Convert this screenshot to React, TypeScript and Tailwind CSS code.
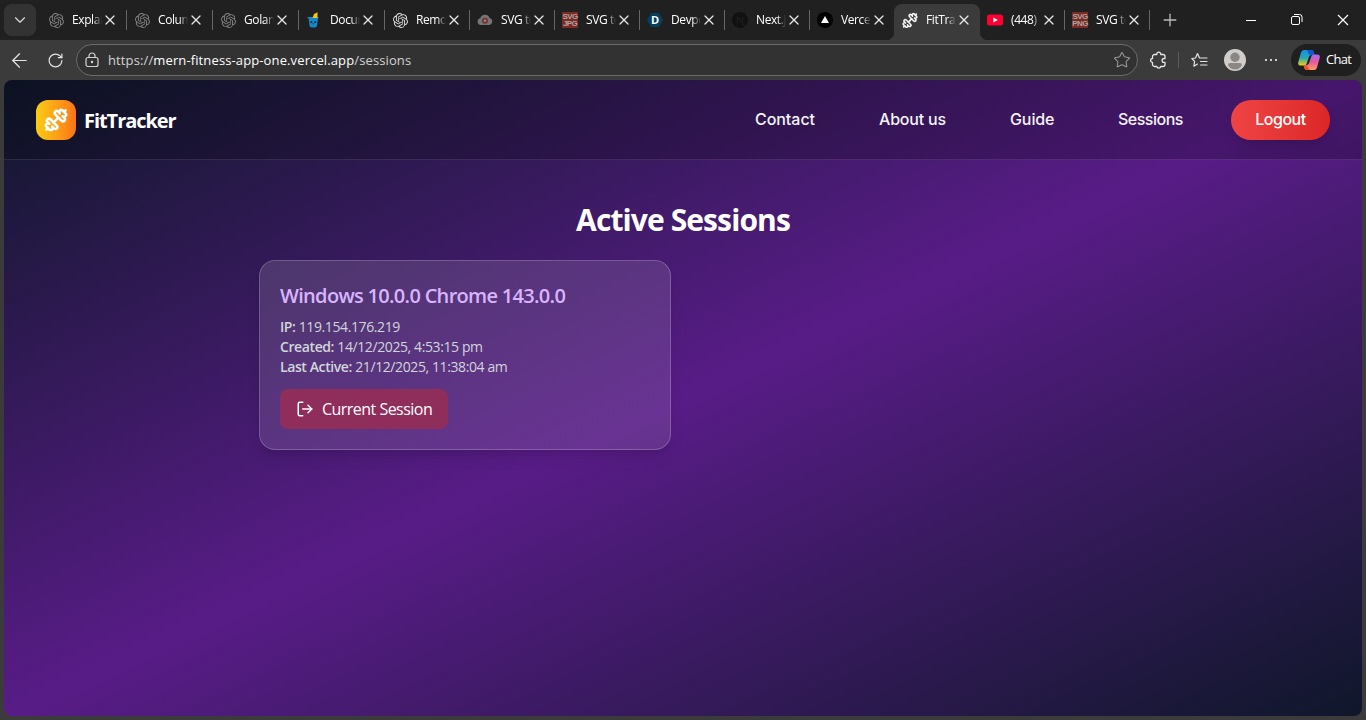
import type { ReactNode } from 'react';
import {
  ArrowLeft,
  ChevronDown,
  Dumbbell,
  LogOut,
  Plus,
  RotateCw,
  Star,
  X,
} from 'lucide-react';
import { SiNextdotjs, SiOpenai } from 'react-icons/si';

type Tab = {
  title: string;
  icon: ReactNode;
  active?: boolean;
  className: string;
  hideDivider?: boolean;
};

type Session = {
  device: string;
  ip: string;
  created: string;
  lastActive: string;
};

const SvgBadge = ({ label }: { label: string }) => (
  <div className="flex h-4 w-4 flex-col items-center justify-center bg-[#7d2a22] font-['Liberation_Sans'] text-[8px] leading-[7.5px] font-bold tracking-[-0.6px] text-[#aaa5a3]">
    <span>SVG</span>
    <span>{label}</span>
  </div>
);

const CupIcon = () => (
  <svg width="16" height="16" viewBox="0 0 16 16">
    <path d="M2.5 5h9.6l-1 8.600q-.2 2-3.800 2t-3.800-2z" fill="#1488c9" />
    <path d="M1.5 5h11v1.500h-11z" fill="#0f86c9" />
    <path d="M6.500 6 8 2 11.500.3v5.700z" fill="#f2c511" />
    <circle cx="5.400" cy="10" r="1" fill="#06263a" />
    <circle cx="9.200" cy="10" r="1" fill="#06263a" />
    <path d="M6.200 11.600h2.200q-1 1.400-2.200 0z" fill="#06263a" />
  </svg>
);

const CloudIcon = () => (
  <svg width="16" height="16" viewBox="0 0 16 16">
    <path
      d="M4 13a3.4 3.4 0 0 1-.8-6.7A5 5 0 0 1 12.6 6 3.6 3.6 0 0 1 12.3 13z"
      fill="#757575"
    />
    <circle cx="8" cy="8.7" r="2.2" fill="none" stroke="#7d2a2f" strokeWidth="1.5" />
    <circle cx="8" cy="8.7" r=".8" fill="#999" />
  </svg>
);

const HexIcon = () => (
  <div className="relative h-4 w-4">
    <svg width="16" height="16" viewBox="0 0 16 16">
      <path d="M4 1h8l4 7-4 7H4L0 8z" fill="#06405b" />
    </svg>
    <span className="absolute inset-0 text-center font-['Open_Sans'] text-[11px] leading-4 font-bold text-white">
      D
    </span>
  </div>
);

const VercelIcon = () => (
  <svg width="16" height="16" viewBox="0 0 16 16">
    <circle cx="8" cy="8" r="8" fill="#000" />
    <path d="m8 4 4 7H4z" fill="#fff" />
  </svg>
);

const YoutubeIcon = () => (
  <svg width="16" height="16" viewBox="0 0 16 16">
    <rect y="2.5" width="16" height="11" rx="2.5" fill="#ff0033" />
    <path d="m6.3 5.6 4.5 2.4-4.5 2.4z" fill="#fff" />
  </svg>
);

const tabs: Tab[] = [
  { title: 'Explain', icon: <SiOpenai size={15} color="#808080" />, className: 'w-[86px]' },
  { title: 'Column', icon: <SiOpenai size={15} color="#808080" />, className: 'w-[86px]' },
  { title: 'Golang', icon: <SiOpenai size={15} color="#808080" />, className: 'w-[86px]' },
  { title: 'Docum', icon: <CupIcon />, className: 'w-[86px]' },
  { title: 'Remov', icon: <SiOpenai size={15} color="#dedede" />, className: 'w-[85px]' },
  { title: 'SVG to', icon: <CloudIcon />, className: 'w-[85px]' },
  { title: 'SVG to', icon: <SvgBadge label="JPG" />, className: 'w-[85px]' },
  { title: 'Devpo', icon: <HexIcon />, className: 'w-[85px]' },
  { title: 'Next.js', icon: <SiNextdotjs size={16} color="#111" />, className: 'w-[85px]' },
  { title: 'Vercel', icon: <VercelIcon />, className: 'w-[85px]', hideDivider: true },
  {
    title: 'FitTrac',
    icon: <Dumbbell size={17} strokeWidth={2.4} color="#f4f4f4" />,
    active: true,
    className: 'w-[85px]',
    hideDivider: true,
  },
  { title: '(448)', icon: <YoutubeIcon />, className: 'w-[85px]' },
  { title: 'SVG to', icon: <SvgBadge label="PNG" />, className: 'w-[85px]' },
];

const sessions: Session[] = [
  {
    device: 'Windows 10.0.0 Chrome 143.0.0',
    ip: '119.154.176.219',
    created: '14/12/2025, 4:53:15 pm',
    lastActive: '21/12/2025, 11:38:04 am',
  },
];

const links = [
  { label: 'Contact', className: 'w-[60px] tracking-[-0.05px]' },
  { label: 'About us', className: 'w-[67px] tracking-[-0.2px]' },
  { label: 'Guide', className: 'w-[44px] tracking-[-0.1px]' },
  { label: 'Sessions', className: 'w-[65px] tracking-[-0.5px]' },
];

function BrowserTab({ tab }: { tab: Tab }) {
  return (
    <div className={`relative flex h-9 shrink-0 items-center pb-1 pl-[7px] ${tab.className}`}>
      {tab.active && (
        <>
          <div className="absolute inset-y-0 -left-px w-[86px] rounded-t-lg bg-[#3b3b3b]" />
          <div className="absolute bottom-0 -left-[9px] h-2 w-2 bg-[radial-gradient(circle_at_0_0,transparent_8px,#3b3b3b_8.5px)]" />
          <div className="absolute -right-2 bottom-0 h-2 w-2 bg-[radial-gradient(circle_at_100%_0,transparent_8px,#3b3b3b_8.5px)]" />
        </>
      )}
      <div className="relative flex h-4 w-4 shrink-0 items-center justify-center">{tab.icon}</div>
      <span className="relative ml-2 w-[30px] overflow-hidden mask-r-from-70% text-[12px] leading-4 tracking-[-0.4px] whitespace-nowrap text-white">
        {tab.title}
      </span>
      <X className="relative shrink-0 text-[#e8e8e8]" size={16} strokeWidth={1.9} />
      {!tab.hideDivider && <div className="absolute top-1.5 right-0 h-5 w-px bg-[#666]" />}
    </div>
  );
}

function TabStrip() {
  return (
    <div className="flex h-10 bg-[#202020] pt-1">
      <div className="ml-1 flex h-8 w-8 shrink-0 items-center justify-center rounded-lg bg-[#333]">
        <ChevronDown size={18} strokeWidth={1.5} className="text-[#ddd]" />
      </div>
      <div className="ml-[5px] flex">
        {tabs.map((tab, i) => (
          <BrowserTab key={i} tab={tab} />
        ))}
      </div>
      <Plus size={20} strokeWidth={1.6} className="mt-1.5 ml-2.5 text-[#bbb]" />
      <div className="mt-1.5 mr-[17px] ml-auto flex h-5 items-center text-white">
        <div className="mr-[35px] h-px w-2.5 bg-white" />
        <svg className="mr-[34px]" width="12" height="12" viewBox="0 0 12 12" fill="none" stroke="currentColor">
          <rect x=".5" y="2.5" width="8" height="8" rx="1.5" />
          <path d="M3 .5h5.5a2.5 2.5 0 0 1 2.5 2.5v5" />
        </svg>
        <svg width="12" height="12" viewBox="0 0 12 12" fill="none" stroke="currentColor" strokeWidth="1.2">
          <path d="m1 1 10 10M11 1 1 11" />
        </svg>
      </div>
    </div>
  );
}

function AddressBar() {
  return (
    <div className="flex h-10 items-center bg-[#3b3b3b] text-[#e5e5e5]">
      <ArrowLeft size={23} strokeWidth={1.3} className="ml-2" />
      <RotateCw size={17} strokeWidth={1.7} className="ml-4" />
      <div className="ml-3 flex h-8 w-[1062px] items-center rounded-full border border-[#6b6b6b] bg-[#323232] pr-[6px] pl-2">
        <svg width="14" height="16" viewBox="0 0 14 16" fill="none" stroke="#d5d5d5" strokeWidth="1.2">
          <rect x="1" y="5.5" width="12" height="9" rx="2" />
          <path d="M4 5.500V4a3 3 0 0 1 6 0v1.500" />
          <circle cx="7" cy="10" r=".6" fill="#d5d5d5" />
        </svg>
        <span className="ml-[9px] pt-px text-[13px] tracking-[0.12px] text-[#d2d2d2]">
          https://<span className="text-white">mern-fitness-app-one.vercel.app</span>/sessions
        </span>
        <Star size={18} strokeWidth={1.4} className="ml-auto text-[#999]" />
      </div>
      <svg className="ml-3" width="17" height="18" viewBox="0 0 17 18" fill="none" stroke="currentColor" strokeWidth="1.3">
        <path
          d="M4.500 3.500h2.300a2 2 0 1 1 3.900 0H13a2 2 0 0 1 2 2v2h-1a1.900 1.900 0 1 0 0 3.800h1v2.200a2 2 0 0 1-2 2h-2.300a2 2 0 0 1-3.900 0H4.500a2 2 0 0 1-2-2v-2.200a1.900 1.900 0 1 1 0-3.800v-2a2 2 0 0 1 2-2z"
          strokeLinejoin="round"
        />
      </svg>
      <div className="ml-[11px] h-4 w-px bg-[#5c5c5c]" />
      <svg className="ml-3" width="17" height="17" viewBox="0 0 17 17" fill="none" stroke="currentColor" strokeWidth="1.2">
        <path
          d="M8.500 6 6.500 1.500 4.500 6 .8 6.500l2.800 2.900-.7 4.800 3.600-2.100M8.500 6H16M9.500 9.500H16M9.500 13H16"
          strokeLinejoin="round"
          strokeLinecap="round"
        />
      </svg>
      <svg className="ml-4" width="22" height="22" viewBox="0 0 22 22">
        <circle cx="11" cy="11" r="11" fill="#d0cdca" />
        <circle cx="11" cy="8.2" r="4.7" fill="#8b8785" />
        <path d="M4 16q0-2 2-2h10q2 0 2 2-2.500 4.500-7 4.500T4 16z" fill="#8b8785" />
      </svg>
      <div className="ml-[19px] flex w-[12px] gap-[3px]">
        <div className="h-0.5 w-0.5 shrink-0 rounded-full bg-white" />
        <div className="h-0.5 w-0.5 shrink-0 rounded-full bg-white" />
        <div className="h-0.5 w-0.5 shrink-0 rounded-full bg-white" />
      </div>
      <div className="ml-[14px] flex h-8 w-[70px] items-center rounded-full bg-[#1f1f1f] pl-[7px]">
        <CopilotIcon />
        <span className="ml-[6px] text-[13px] tracking-[-0.7px] text-white">Chat</span>
      </div>
    </div>
  );
}

function CopilotIcon() {
  return (
    <svg width="22" height="20" viewBox="0 0 22 20">
      <defs>
        <linearGradient id="cool" x1="0" y1="0" x2="0" y2="1">
          <stop offset="0" stopColor="#1b8fef" />
          <stop offset=".5" stopColor="#22a8b5" />
          <stop offset="1" stopColor="#f0cd1b" />
        </linearGradient>
        <linearGradient id="warm" x1="0" y1="0" x2="0" y2="1">
          <stop offset="0" stopColor="#a46bf0" />
          <stop offset=".5" stopColor="#e9599d" />
          <stop offset="1" stopColor="#ffa15c" />
        </linearGradient>
      </defs>
      <path
        d="M6 0h7q2 0 2.700 2L16.500 5h-3q-2 0-2.600 2L8.500 14q-.5 1.500-2.500 1.500H3Q-.5 15.500.3 12L3 2.500Q3.800 0 6 0z"
        fill="url(#cool)"
      />
      <path d="M9 0h4q2 0 2.700 2L16.500 5h-3L11 4.500z" fill="#1557cf" />
      <path
        d="M16 20H9q-2 0-2.700-2L5.500 15h3q2 0 2.600-2L13.500 6q.5-1.500 2.500-1.500h3q3.500 0 2.700 3.500L19 17.500q-.8 2.500-3 2.500z"
        fill="url(#warm)"
      />
      <path d="M12 20H9q-2 0-2.700-2L5.500 15h3z" fill="#ef5133" />
    </svg>
  );
}

function Navbar() {
  return (
    <header className="flex h-20 items-center justify-between border-b border-white/10 bg-black/20 px-8 font-['Open_Sans',sans-serif]">
      <div className="flex items-center gap-2">
        <div className="flex h-10 w-10 items-center justify-center rounded-xl bg-linear-to-r from-[#facc15] to-[#f97316]">
          <Dumbbell size={24} strokeWidth={2.6} className="text-white" />
        </div>
        <span className="pt-0.5 text-xl font-bold tracking-[-1.05px] text-white">FitTracker</span>
      </div>
      <nav className="flex items-center font-['Inter',sans-serif] text-base font-medium text-[#f3f4f6]">
        <div className="mr-12 flex gap-16 pb-0.5">
          {links.map((link) => (
            <a key={link.label} href="#" className={`whitespace-nowrap ${link.className}`}>
              {link.label}
            </a>
          ))}
        </div>
        <button
          type="button"
          className="h-10 w-[99px] rounded-full bg-linear-to-r from-[#ef4444] to-[#dc2626] pb-0.5 tracking-[-0.5px] text-white shadow-lg"
        >
          Logout
        </button>
      </nav>
    </header>
  );
}

function SessionCard({ session }: { session: Session }) {
  return (
    <div className="h-[190px] rounded-2xl border border-white/20 bg-linear-to-br from-white/13 to-white/10 p-5 shadow-lg">
      <h2 className="mt-px text-xl leading-7 font-semibold tracking-[-0.69px] text-[#d8b4fe]">{session.device}</h2>
      <div className="mt-[7px] text-sm leading-5 tracking-[-0.4px] text-[#d1d5db]">
        <p>
          <strong className="font-semibold">IP:</strong> {session.ip}
        </p>
        <p>
          <strong className="font-semibold">Created:</strong> {session.created}
        </p>
        <p>
          <strong className="font-semibold">Last Active:</strong> {session.lastActive}
        </p>
      </div>
      <button
        type="button"
        className="mt-3 flex h-10 w-[168px] items-center gap-2 rounded-lg bg-[#8f2d5b] px-4 tracking-[-0.53px] whitespace-nowrap text-white"
      >
        <LogOut size={18} className="shrink-0" />
        Current Session
      </button>
    </div>
  );
}

export default function App() {
  return (
    <div className="flex h-[720px] w-[1366px] flex-col overflow-hidden bg-[#3b3b3b] font-['Open_Sans',sans-serif]">
      <TabStrip />
      <AddressBar />
      <div className="mx-1 h-[636px] overflow-hidden rounded-lg bg-linear-to-br/srgb from-[#0f172a] via-[#581c87] to-[#0f172a]">
        <Navbar />
        <main className="mx-auto w-[848px] pt-10">
          <h1 className="text-center text-3xl leading-10 font-bold tracking-[-0.9px] text-white">Active Sessions</h1>
          <div className="mt-5 grid grid-cols-2 gap-6">
            {sessions.map((session) => (
              <SessionCard key={session.ip} session={session} />
            ))}
          </div>
        </main>
      </div>
    </div>
  );
}
